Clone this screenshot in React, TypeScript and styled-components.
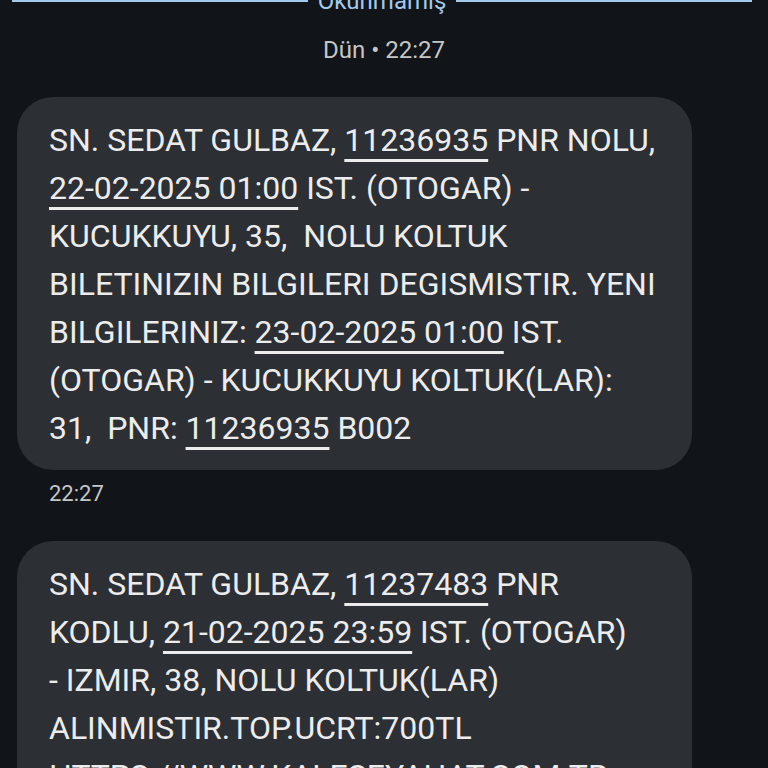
import React from 'react'
import styled, { createGlobalStyle } from 'styled-components'

const GlobalStyle = createGlobalStyle`
  html, body {
    margin: 0;
    padding: 0;
    background: #111418;
    overflow: hidden;
  }
  body {
    font-family: Roboto, "Noto Sans", "Liberation Sans", sans-serif;
    color: #e3e3e3;
  }
`

type Part = string | { link: string }

type MessageType = {
  lines: Part[][]
  time?: string
}

const messages: MessageType[] = [
  {
    lines: [
      ['SN. SEDAT GULBAZ, ', { link: '11236935' }, ' PNR NOLU,'],
      [{ link: '22-02-2025 01:00' }, ' IST. (OTOGAR) -'],
      ['KUCUKKUYU, 35,  NOLU KOLTUK'],
      ['BILETINIZIN BILGILERI DEGISMISTIR. YENI'],
      ['BILGILERINIZ: ', { link: '23-02-2025 01:00' }, ' IST.'],
      ['(OTOGAR) - KUCUKKUYU KOLTUK(LAR):'],
      ['31,  PNR: ', { link: '11236935' }, ' B002'],
    ],
    time: '22:27',
  },
  {
    lines: [
      ['SN. SEDAT GULBAZ, ', { link: '11237483' }, ' PNR'],
      ['KODLU, ', { link: '21-02-2025 23:59' }, ' IST. (OTOGAR)'],
      ['- IZMIR, 38, NOLU KOLTUK(LAR)'],
      ['ALINMISTIR.TOP.UCRT:700TL'],
      ['HTTPS://WWW.KALESEYAHAT.COM.TR'],
    ],
  },
]

export default function App() {
  return (
    <>
      <GlobalStyle />
      <Screen>
        <Divider>
          <Rule />
          <DividerLabel>Okunmamış</DividerLabel>
          <Rule />
        </Divider>
        <DayStamp>Dün • 22:27</DayStamp>
        <Thread>
          {messages.map((m, i) => (
            <Group key={i}>
              <Bubble>
                {m.lines.map((line, j) => (
                  <Line key={j}>
                    {line.map((part, k) =>
                      typeof part === 'string' ? (
                        <React.Fragment key={k}>{part}</React.Fragment>
                      ) : (
                        <Link key={k}>{part.link}</Link>
                      )
                    )}
                  </Line>
                ))}
              </Bubble>
              {m.time && <Time>{m.time}</Time>}
            </Group>
          ))}
        </Thread>
      </Screen>
    </>
  )
}

const Screen = styled.div`
  width: 768px;
  height: 768px;
  overflow: hidden;
  display: flex;
  flex-direction: column;
`

const Divider = styled.div`
  display: flex;
  align-items: center;
  gap: 10px;
  padding: 0 16px 0 12px;
  margin-top: -16px;
  height: 34px;
`

const Rule = styled.div`
  flex: 1;
  height: 2px;
  background: #a3c9ec;
`

const DividerLabel = styled.span`
  font-size: 24px;
  color: #a3c9ec;
  line-height: 34px;
`

const DayStamp = styled.div`
  text-align: center;
  font-size: 24px;
  line-height: 30px;
  color: #c4c7c5;
  margin-top: 17px;
`

const Thread = styled.div`
  display: flex;
  flex-direction: column;
  gap: 32px;
  padding: 32px 0 0 17px;
`

const Group = styled.div`
  display: flex;
  flex-direction: column;
`

const Bubble = styled.div`
  width: 675px;
  box-sizing: border-box;
  background: #2c2f33;
  border-radius: 36px;
  padding: 19px 20px 18px 32px;
  font-size: 32px;
  line-height: 48px;
  color: #ececec;
  white-space: pre;
`

const Line = styled.div``

const Link = styled.span`
  text-decoration: underline;
  text-decoration-thickness: 3px;
  text-underline-offset: 8px;
`

const Time = styled.div`
  font-size: 22px;
  line-height: 30px;
  color: #c4c7c5;
  padding: 9px 0 0 32px;
`
